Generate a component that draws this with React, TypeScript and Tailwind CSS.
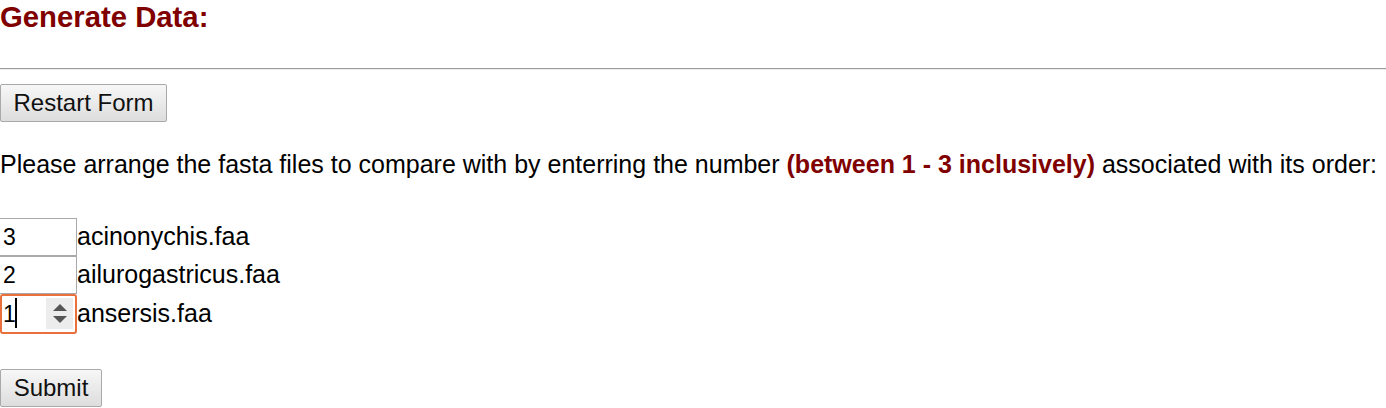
import { useState } from 'react'

const files = [
  { name: 'acinonychis.faa', order: '3' },
  { name: 'ailurogastricus.faa', order: '2' },
  { name: 'ansersis.faa', order: '1' },
]

const btn =
  'h-[38px] border border-[#a9a9a9] rounded-[2px] bg-gradient-to-b from-[#f7f7f7] to-[#dddddd] text-[24px] leading-none text-[#111] font-["Liberation_Sans",Arial,sans-serif]'

const App = () => {
  const [orders, setOrders] = useState(files.map((f) => f.order))

  return (
    <div className='w-[1386px] h-[408px] overflow-hidden bg-white text-black font-["Liberation_Sans",Arial,sans-serif]'>
      <h3 className="h-[34px] text-[29.3px] leading-[34px] font-bold text-[#800000]">Generate Data:</h3>

      <div className="mt-[34px] h-[2px] border-t border-[#9a9a9a] bg-[#eeeeee]" />

      <div className="mt-[14px]">
        <button type="button" className={`${btn} w-[167px]`} onClick={() => setOrders(files.map((f) => f.order))}>
          Restart Form
        </button>
      </div>

      <p className="mt-[27px] text-[25px] leading-[30px] whitespace-nowrap">
        Please arrange the fasta files to compare with by enterring the number{' '}
        <b className="text-[#800000]">(between 1 - 3 inclusively)</b> associated with its order:
      </p>

      <form className="mt-[39px]" onSubmit={(e) => e.preventDefault()}>
        {files.map((f, i) => {
          const last = i === files.length - 1
          return (
            <div key={f.name} className={`flex items-center ${last ? 'h-[40px]' : 'h-[38px]'}`}>
              {last ? (
                <div className="relative w-[77px] h-[40px] border-2 border-[#e9703c] rounded-[3px]">
                  <input
                    value={orders[i]}
                    onChange={(e) => setOrders(orders.map((o, j) => (j === i ? e.target.value : o)))}
                    className="w-full h-full pl-[1px] text-[23px] bg-transparent outline-none"
                  />
                  <span className="absolute left-[13px] top-[2px] w-[2px] h-[30px] bg-black" />
                  <span className="absolute left-[44px] top-[2px] w-[27px] h-[31px] bg-[#ececec] flex flex-col items-center justify-center gap-[5px]">
                    <span className="w-0 h-0 border-x-[7px] border-x-transparent border-b-[7px] border-b-[#555]" />
                    <span className="w-0 h-0 border-x-[7px] border-x-transparent border-t-[7px] border-t-[#555]" />
                  </span>
                </div>
              ) : (
                <input
                  value={orders[i]}
                  onChange={(e) => setOrders(orders.map((o, j) => (j === i ? e.target.value : o)))}
                  className="-ml-px w-[78px] h-[38px] border border-[#a9a9a9] pl-[3px] text-[23px] outline-none"
                />
              )}
              <span className="-mt-[3px] text-[25px] leading-[30px]">{f.name}</span>
            </div>
          )
        })}

        <div className="mt-[35px]">
          <button type="submit" className={`${btn} w-[102px]`}>
            Submit
          </button>
        </div>
      </form>
    </div>
  )
}

export default App
